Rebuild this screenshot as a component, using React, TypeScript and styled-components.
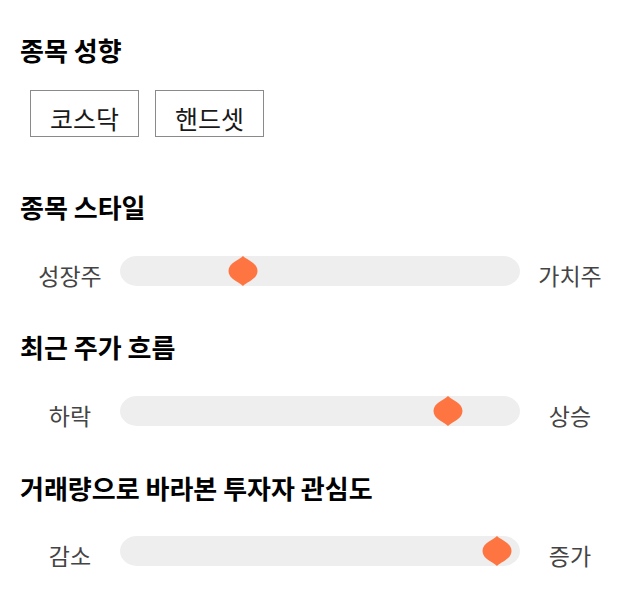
import React from 'react';
import styled, { createGlobalStyle } from 'styled-components';

const GlobalStyle = createGlobalStyle`
  body {
    margin: 0;
    background: #fff;
    font-family: 'Noto Sans CJK KR', 'Noto Sans', sans-serif;
  }
`;

const Page = styled.div`
  width: 640px;
  padding: 33px 20px 30px;
  box-sizing: border-box;
`;

const Title = styled.h2<{ $gap: number }>`
  margin: ${(props) => props.$gap}px 0 0;
  font-size: 26px;
  line-height: 34px;
  font-weight: 700;
  color: #000;
`;

const ChipRow = styled.div`
  display: flex;
  gap: 16px;
  margin-top: 23px;
  padding-left: 10px;
`;

const Chip = styled.button`
  width: 109px;
  height: 47px;
  padding: 9px 0 0;
  border: 1px solid #8a8a8a;
  background: #fff;
  font-family: inherit;
  font-size: 25px;
  line-height: 30px;
  color: #1a1a1a;
  cursor: pointer;
`;

const SliderRow = styled.div<{ $gap: number }>`
  display: grid;
  grid-template-columns: 100px 400px 100px;
  align-items: center;
  margin-top: ${(props) => props.$gap}px;
`;

const SideLabel = styled.span`
  text-align: center;
  font-size: 23px;
  line-height: 30px;
  padding-top: 8px;
  color: #444;
`;

const Track = styled.div`
  position: relative;
  height: 30px;
  background: #eeeeee;
  border-radius: 17px / 15px;
`;

const Thumb = styled.svg`
  position: absolute;
  top: 0;
  width: 30px;
  height: 30px;
  margin-left: -15px;
`;

type SliderProps = { left: string; right: string; value: number; gap: number };

const Slider = ({ left, right, value, gap }: SliderProps) => (
  <SliderRow $gap={gap}>
    <SideLabel>{left}</SideLabel>
    <Track>
      <Thumb viewBox="0 0 30 30" style={{ left: `${value}px` }}>
        <path
          d="M15 0 C19 4 29.5 7 29.5 15 C29.5 23 19 26 15 30 C11 26 0.5 23 0.5 15 C0.5 7 11 4 15 0 Z"
          fill="#ff7542"
        />
      </Thumb>
    </Track>
    <SideLabel>{right}</SideLabel>
  </SliderRow>
);

const App = () => (
  <Page>
    <GlobalStyle />
    <Title $gap={0}>종목 성향</Title>
    <ChipRow>
      <Chip>코스닥</Chip>
      <Chip>핸드셋</Chip>
    </ChipRow>

    <Title $gap={53}>종목 스타일</Title>
    <Slider left="성장주" right="가치주" value={123} gap={28} />

    <Title $gap={40}>최근 주가 흐름</Title>
    <Slider left="하락" right="상승" value={328} gap={28} />

    <Title $gap={41}>거래량으로 바라본 투자자 관심도</Title>
    <Slider left="감소" right="증가" value={377} gap={27} />
  </Page>
);

export default App;
